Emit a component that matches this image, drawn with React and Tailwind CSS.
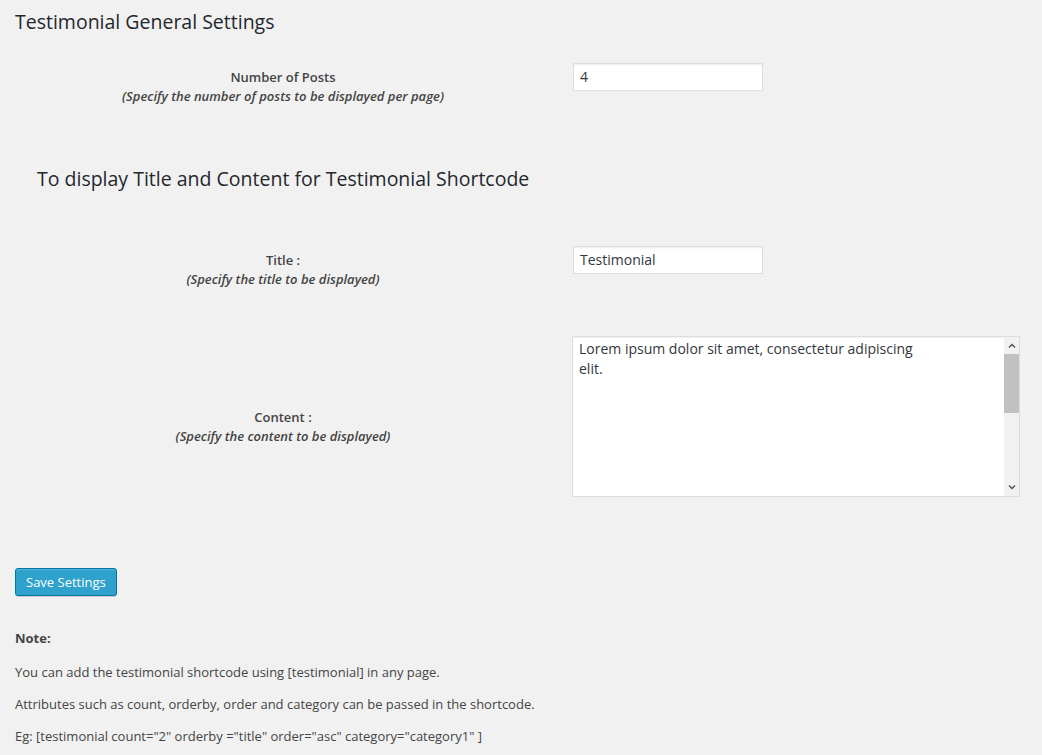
import React from "react";

const font = { fontFamily: '"Open Sans", "Noto Sans", sans-serif' };

const FieldLabel = ({ title, hint }) => (
  <div className="w-[566px] shrink-0 text-center text-[#444]">
    <p className="text-[13px] font-semibold leading-[20px]">{title}</p>
    <p className="text-[13px] font-semibold italic leading-[19px]">{hint}</p>
  </div>
);

const TextBox = ({ value }) => (
  <div className="w-[190px] h-[28px] border border-[#ddd] bg-white shadow-[inset_0_1px_2px_rgba(0,0,0,0.07)] px-[6px] text-[14px] leading-[26px] text-[#32373c]">
    {value}
  </div>
);

const App = () => {
  return (
    <div
      style={font}
      className="min-h-[755px] w-[1042px] bg-[#f1f1f1] pl-[15px] pt-[8px] text-[#444]"
    >
      <h2 className="text-[19.5px] leading-[28px] text-[#23282d]">
        Testimonial General Settings
      </h2>

      <div className="mt-[27px] flex -ml-[15px]">
        <div className="mt-[4px]">
          <FieldLabel
            title="Number of Posts"
            hint="(Specify the number of posts to be displayed per page)"
          />
        </div>
        <div className="ml-[7px]">
          <TextBox value="4" />
        </div>
      </div>

      <h3 className="mt-[59px] ml-[22px] text-[19.5px] leading-[28px] text-[#23282d]">
        To display Title and Content for Testimonial Shortcode
      </h3>

      <div className="mt-[53px] flex -ml-[15px]">
        <div className="mt-[4px]">
          <FieldLabel title="Title :" hint="(Specify the title to be displayed)" />
        </div>
        <div className="ml-[7px]">
          <TextBox value="Testimonial" />
        </div>
      </div>

      <div className="mt-[47px] flex items-start -ml-[15px]">
        <div className="mt-[71px]">
          <FieldLabel
            title="Content :"
            hint="(Specify the content to be displayed)"
          />
        </div>
        <div className="ml-[6px] flex h-[161px] w-[448px] border border-[#ddd] bg-white shadow-[inset_0_1px_2px_rgba(0,0,0,0.07)]">
          <div className="flex-1 px-[6px] pt-[2px] text-[14px] leading-[20px] text-[#32373c]">
            Lorem ipsum dolor sit amet, consectetur adipiscing
            <br />
            elit.
          </div>
          <div className="flex w-[15px] flex-col bg-[#f1f1f1]">
            <div className="flex h-[17px] items-center justify-center">
              <svg width="8" height="5" viewBox="0 0 8 5">
                <path d="M1 4.5 L4 1.5 L7 4.5" fill="none" stroke="#505050" strokeWidth="1.4" />
              </svg>
            </div>
            <div className="h-[59px] bg-[#c1c1c1]" />
            <div className="flex-1" />
            <div className="flex h-[17px] items-center justify-center">
              <svg width="8" height="5" viewBox="0 0 8 5">
                <path d="M1 0.5 L4 3.5 L7 0.5" fill="none" stroke="#505050" strokeWidth="1.4" />
              </svg>
            </div>
          </div>
        </div>
      </div>

      <button className="mt-[71px] h-[28px] rounded-[3px] border border-[#0074a2] bg-[#2ea2cc] px-[10px] text-[13px] leading-[26px] text-white shadow-[inset_0_1px_0_rgba(120,200,230,0.5),0_1px_0_rgba(0,0,0,0.15)]">
        Save Settings
      </button>

      <div className="mt-[32px] text-[13px] leading-[20px] text-[#444]">
        <p className="font-bold">Note:</p>
        <p className="mt-[14px]">
          You can add the testimonial shortcode using [testimonial] in any page.
        </p>
        <p className="mt-[12px]">
          Attributes such as count, orderby, order and category can be passed in
          the shortcode.
        </p>
        <p className="mt-[12px]">
          Eg: [testimonial count="2" orderby ="title" order="asc"
          category="category1" ]
        </p>
      </div>
    </div>
  );
};

export default App;
